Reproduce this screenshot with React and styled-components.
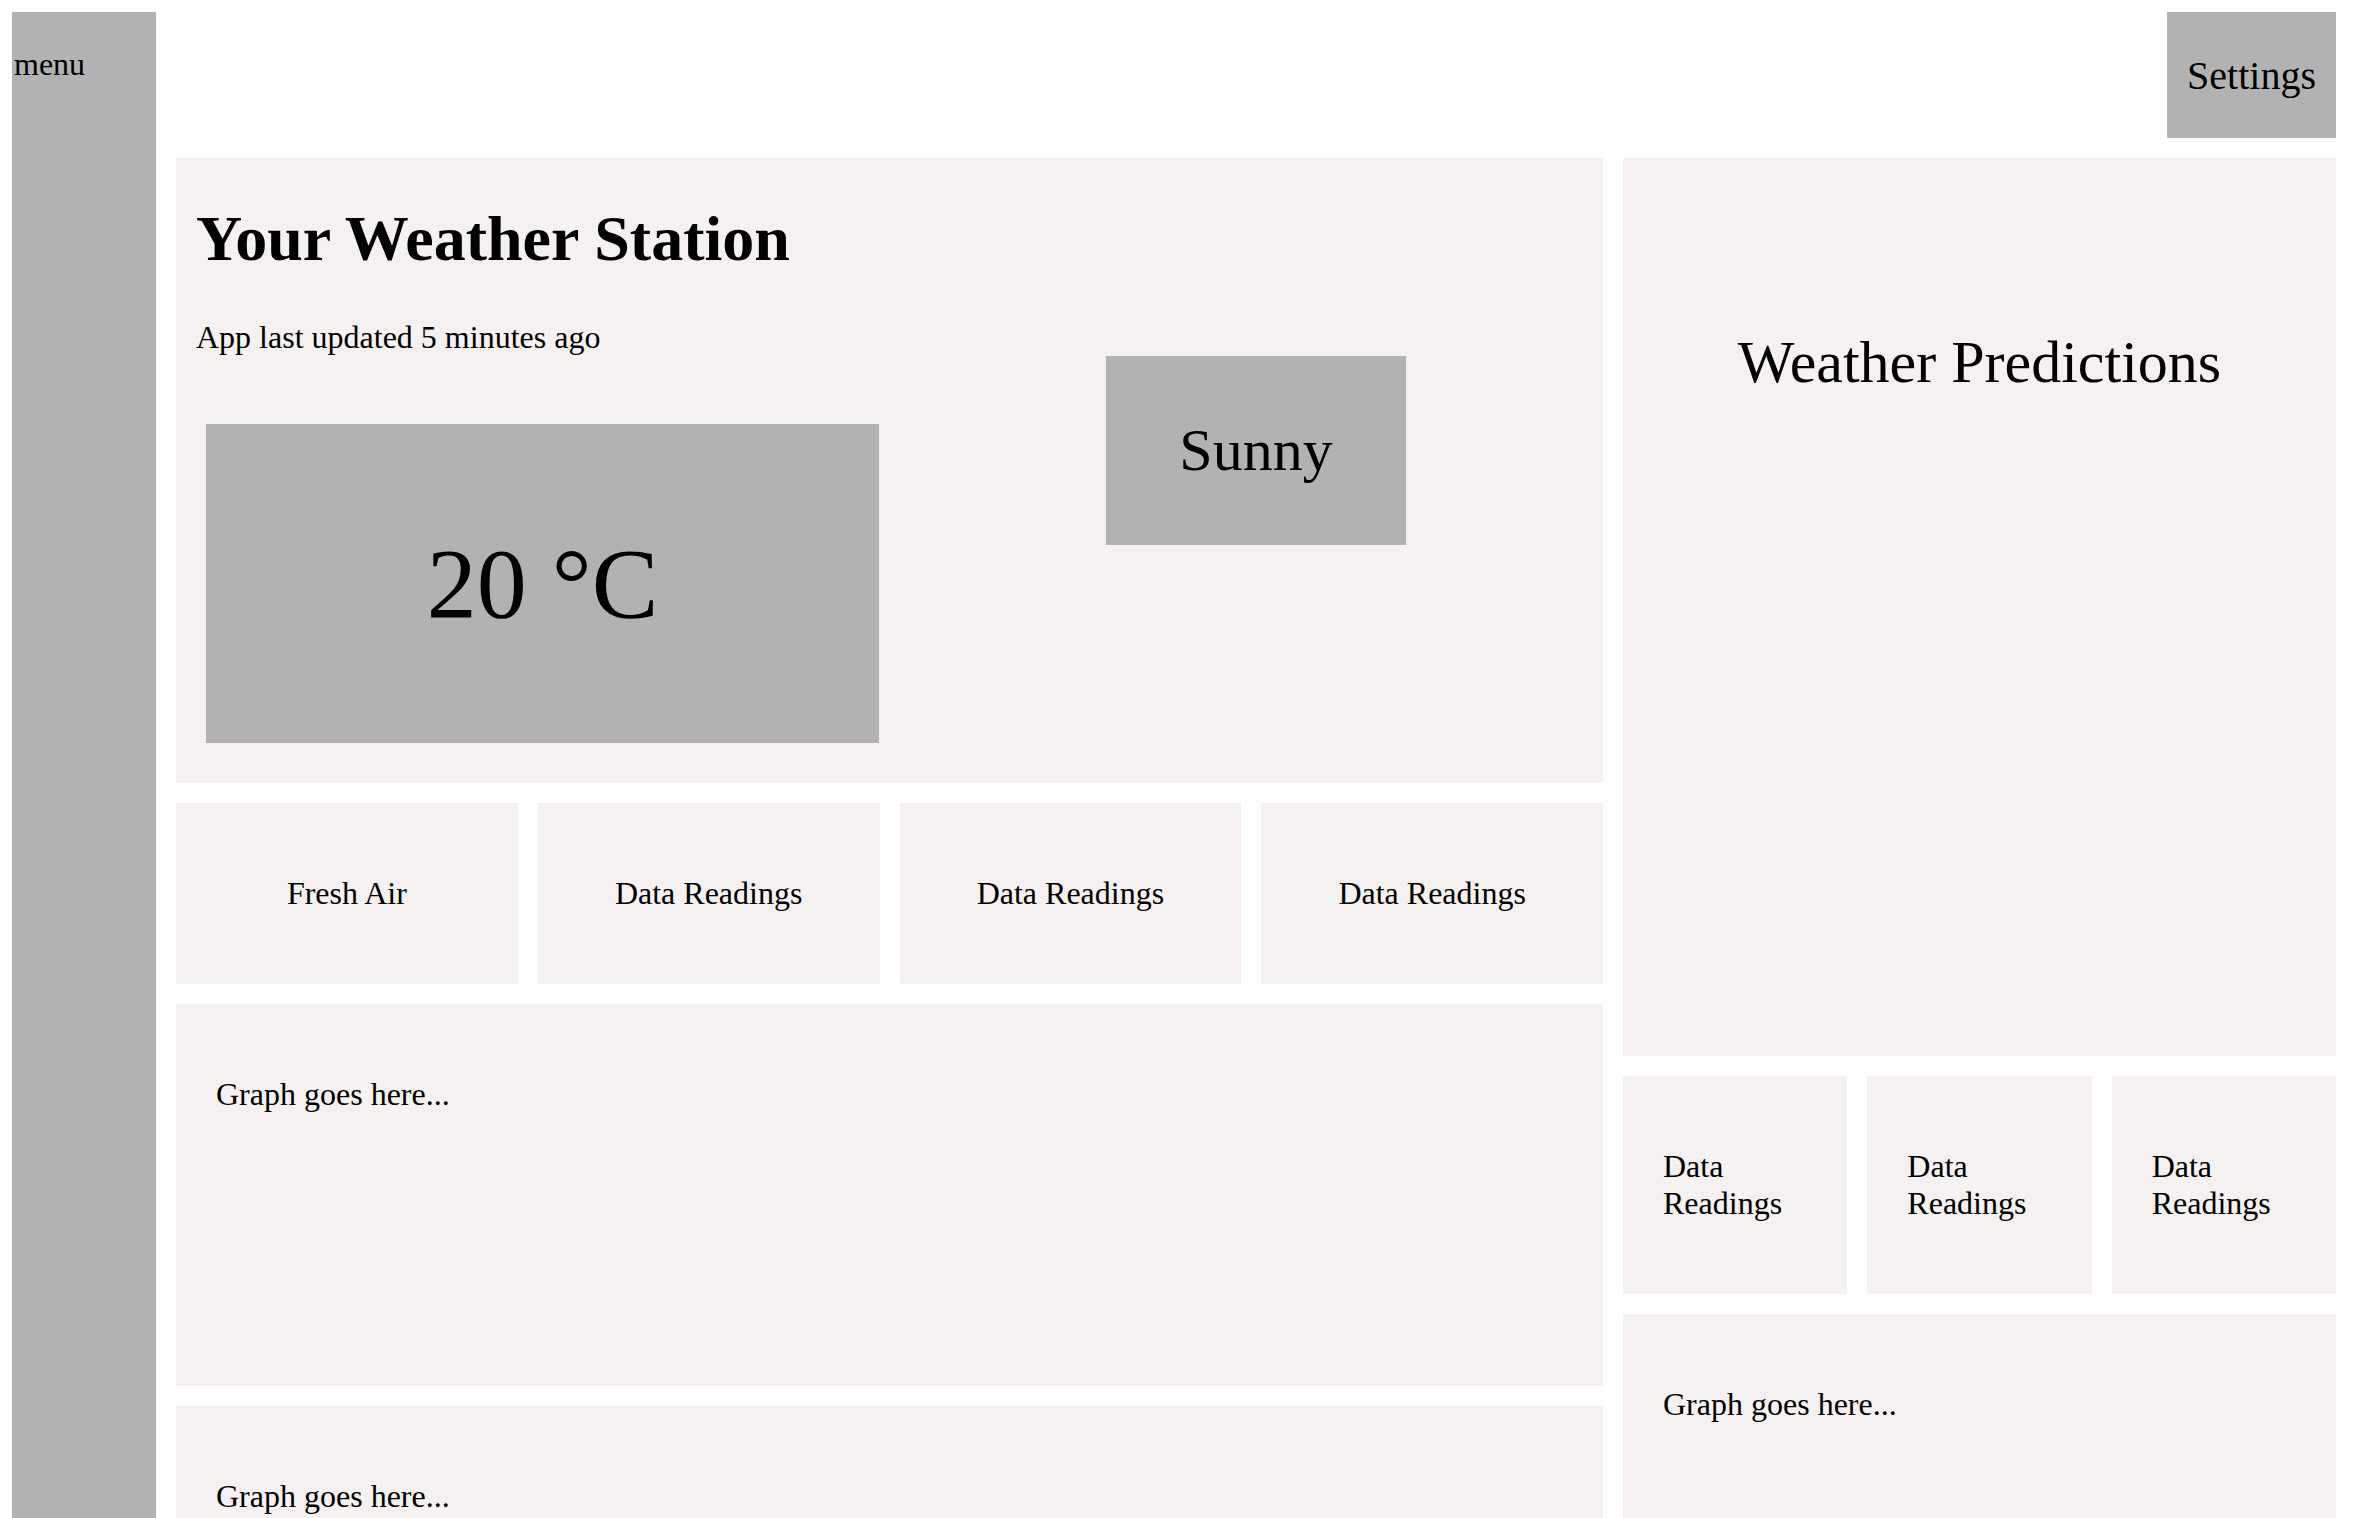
import React from 'react'
import styled, { createGlobalStyle } from 'styled-components'

const GlobalStyle = createGlobalStyle`
  html, body {
    margin: 0;
    overflow: hidden;
    background: #ffffff;
  }
  body {
    font-family: "Liberation Serif", "Times New Roman", serif;
    font-size: 32px;
    color: #000;
  }
`;

const Page = styled.div`
  display: flex;
  gap: 20px;
  padding: 12px 26px 12px 12px;
  min-height: 100vh;
  box-sizing: border-box;
`;

const Sidebar = styled.nav`
  flex: 0 0 144px;
  background: #b3b2b3;
  padding: 0 2px;
  box-sizing: border-box;

  p {
    margin: 34px 0 0;
  }
`;

const Content = styled.div`
  flex: 1;
  display: flex;
  flex-direction: column;
  gap: 20px;
`;

const TopBar = styled.header`
  display: flex;
  justify-content: flex-end;
  height: 126px;
`;

const SettingsButton = styled.div`
  width: 169px;
  height: 126px;
  background: #b3b2b3;
  display: flex;
  align-items: center;
  justify-content: center;
  font-size: 40px;
`;

const Columns = styled.div`
  display: grid;
  grid-template-columns: 1427px 713px;
  gap: 20px;
  align-items: start;
`;

const Column = styled.div`
  display: flex;
  flex-direction: column;
  gap: 20px;
`;

const Panel = styled.section`
  background: #f4f1f0;
`;

const StationPanel = styled(Panel)`
  display: flex;
`;

const StationInfo = styled.div`
  width: 733px;
  padding: 0 0 40px 20px;
  box-sizing: border-box;
`;

const Title = styled.h1`
  font-size: 64px;
  font-weight: bold;
  margin: 44px 0 43px;
`;

const Updated = styled.p`
  margin: 0 0 68px;
`;

const GreyBox = styled.div`
  background: #b3b2b3;
  display: flex;
  align-items: center;
  justify-content: center;
`;

const TempBox = styled(GreyBox)`
  margin-left: 10px;
  width: 673px;
  height: 319px;
  font-size: 100px;
`;

const ConditionArea = styled.div`
  flex: 1;
  display: flex;
  justify-content: center;
  align-items: flex-start;
  padding-top: 198px;
`;

const ConditionBox = styled(GreyBox)`
  width: 300px;
  height: 189px;
  font-size: 60px;
`;

const CardRow = styled.div`
  display: grid;
  grid-template-columns: repeat(${p => p.$count}, 1fr);
  gap: 20px;
`;

const Card = styled(Panel)`
  padding: 40px;
  text-align: ${p => (p.$center ? 'center' : 'left')};

  p {
    margin: 32px 0;
  }
`;

const GraphPanel = styled(Panel)`
  height: 382px;
  padding: 40px;
  box-sizing: border-box;

  p {
    margin: 32px 0;
  }
`;

const PredictionsPanel = styled(Panel)`
  height: 898px;
  padding-top: 170px;
  box-sizing: border-box;
  text-align: center;

  h2 {
    margin: 0;
    font-size: 60px;
    font-weight: normal;
  }
`;

export default function App() {
  return (
    <>
      <GlobalStyle />
      <Page>
        <Sidebar>
          <p>menu</p>
        </Sidebar>
        <Content>
          <TopBar>
            <SettingsButton>Settings</SettingsButton>
          </TopBar>
          <Columns>
            <Column>
              <StationPanel>
                <StationInfo>
                  <Title>Your Weather Station</Title>
                  <Updated>App last updated 5 minutes ago</Updated>
                  <TempBox>20 °C</TempBox>
                </StationInfo>
                <ConditionArea>
                  <ConditionBox>Sunny</ConditionBox>
                </ConditionArea>
              </StationPanel>
              <CardRow $count={4}>
                <Card $center><p>Fresh Air</p></Card>
                <Card $center><p>Data Readings</p></Card>
                <Card $center><p>Data Readings</p></Card>
                <Card $center><p>Data Readings</p></Card>
              </CardRow>
              <GraphPanel><p>Graph goes here...</p></GraphPanel>
              <GraphPanel><p>Graph goes here...</p></GraphPanel>
            </Column>
            <Column>
              <PredictionsPanel>
                <h2>Weather Predictions</h2>
              </PredictionsPanel>
              <CardRow $count={3}>
                <Card><p>Data Readings</p></Card>
                <Card><p>Data Readings</p></Card>
                <Card><p>Data Readings</p></Card>
              </CardRow>
              <GraphPanel><p>Graph goes here...</p></GraphPanel>
            </Column>
          </Columns>
        </Content>
      </Page>
    </>
  )
}
